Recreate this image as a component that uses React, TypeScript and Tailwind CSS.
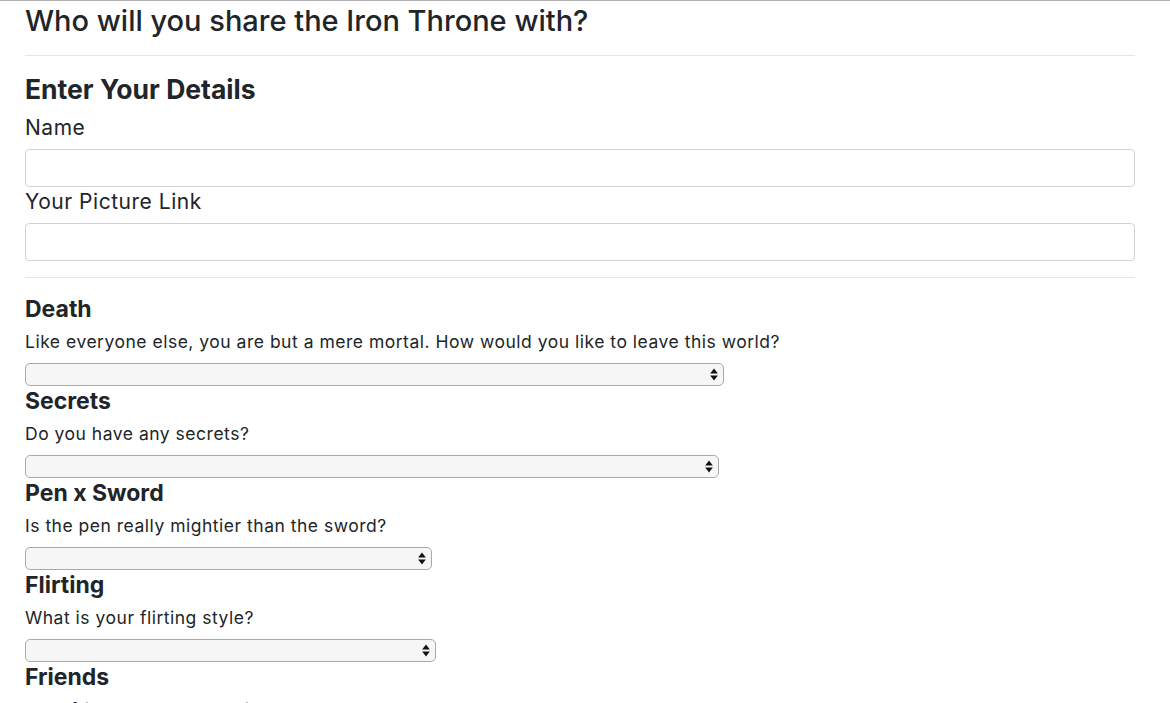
const questions = [
  { title: "Death", text: "Like everyone else, you are but a mere mortal. How would you like to leave this world?", width: "w-[699px]" },
  { title: "Secrets", text: "Do you have any secrets?", width: "w-[694px]" },
  { title: "Pen x Sword", text: "Is the pen really mightier than the sword?", width: "w-[407px]" },
  { title: "Flirting", text: "What is your flirting style?", width: "w-[411px]" },
  { title: "Friends", text: "Your friends would describe you as", width: "w-[500px]" },
];

function FakeSelect({ width }: { width: string }) {
  return (
    <div className={`${width} h-[23px] flex items-center justify-end pr-[5px] bg-[#f6f6f6] border border-[#a9a9a9] rounded-[5px]`}>
      <svg width="8" height="13" viewBox="0 0 8 13">
        <path d="M4 0.5 L7.8 5.5 L0.2 5.5 Z" fill="#111" />
        <path d="M4 12.5 L7.8 7.5 L0.2 7.5 Z" fill="#111" />
      </svg>
    </div>
  );
}

export default function App() {
  return (
    <div className="min-h-screen bg-white border-t border-[#b0b0b0] text-[#212529]" style={{ fontFamily: "Inter, 'Noto Sans', sans-serif" }}>
      <div className="pl-[25px] pr-[35px]">
        <h2 className="text-[29px] font-medium leading-[35px] pt-[2px] pb-[17px] border-b border-[#e6e6e6]">
          Who will you share the Iron Throne with?
        </h2>
        <h3 className="text-[26.5px] font-bold leading-[32px] mt-[17px]">Enter Your Details</h3>
        <label className="block text-[21px] tracking-[0.025em] leading-[25px] mt-[10px]">Name</label>
        <input className="block w-full h-[38px] mt-[9px] border border-[#ced4da] rounded-[4px] outline-none" />
        <label className="block text-[21px] tracking-[0.025em] leading-[25px] mt-[2px]">Your Picture Link</label>
        <input className="block w-full h-[38px] mt-[9px] border border-[#ced4da] rounded-[4px] outline-none" />
        <hr className="mt-[16px] border-0 border-t border-[#e6e6e6]" />
        <div className="pt-[17px]">
          {questions.map((q) => (
            <div key={q.title} className="mb-[1px]">
              <h4 className="text-[23px] font-bold leading-[28px]">{q.title}</h4>
              <p className="text-[17.5px] tracking-[0.029em] leading-[26px] mt-[6px] mb-[8px]">{q.text}</p>
              <FakeSelect width={q.width} />
            </div>
          ))}
        </div>
      </div>
    </div>
  );
}
